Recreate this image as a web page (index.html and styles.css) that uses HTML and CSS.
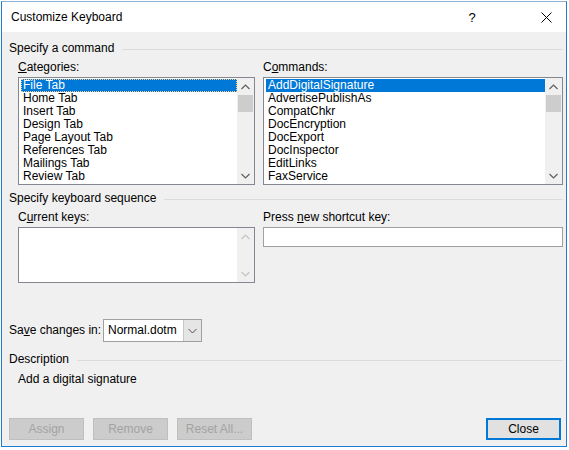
FILE: index.html
```html
<!DOCTYPE html>
<html>
<head>
<meta charset="utf-8">
<link rel="stylesheet" href="styles.css">
</head>
<body>
<div class="window">
  <div class="titlebar">
    <span class="title">Customize Keyboard</span>
    <span class="tb-help">?</span>
    <span class="tb-close">
      <svg width="11" height="11" viewBox="0 0 11 11"><path d="M0.5 0.5 L10.5 10.5 M10.5 0.5 L0.5 10.5" stroke="#000" stroke-width="1" fill="none"/></svg>
    </span>
  </div>
  <div class="content">
    <div class="group-head g1"><span>Specify a command</span><i class="rule"></i></div>
    <div class="cols">
      <div class="col col-left">
        <div class="label"><u>C</u>ategories:</div>
        <div class="listbox">
          <div class="items">
            <div class="item sel">File Tab</div>
            <div class="item">Home Tab</div>
            <div class="item">Insert Tab</div>
            <div class="item">Design Tab</div>
            <div class="item">Page Layout Tab</div>
            <div class="item">References Tab</div>
            <div class="item">Mailings Tab</div>
            <div class="item">Review Tab</div>
          </div>
          <div class="vscroll">
            <span class="arrow"><svg width="9" height="6" viewBox="0 0 9 6"><path d="M0.5 5 L4.5 1 L8.5 5" stroke="#606060" stroke-width="1.2" fill="none"/></svg></span>
            <span class="thumb"></span>
            <span class="track"></span>
            <span class="arrow"><svg width="9" height="6" viewBox="0 0 9 6"><path d="M0.5 1 L4.5 5 L8.5 1" stroke="#606060" stroke-width="1.2" fill="none"/></svg></span>
          </div>
        </div>
      </div>
      <div class="col col-right">
        <div class="label">C<u>o</u>mmands:</div>
        <div class="listbox">
          <div class="items">
            <div class="item sel nofocus">AddDigitalSignature</div>
            <div class="item">AdvertisePublishAs</div>
            <div class="item">CompatChkr</div>
            <div class="item">DocEncryption</div>
            <div class="item">DocExport</div>
            <div class="item">DocInspector</div>
            <div class="item">EditLinks</div>
            <div class="item">FaxService</div>
          </div>
          <div class="vscroll">
            <span class="arrow"><svg width="9" height="6" viewBox="0 0 9 6"><path d="M0.5 5 L4.5 1 L8.5 5" stroke="#606060" stroke-width="1.2" fill="none"/></svg></span>
            <span class="thumb"></span>
            <span class="track"></span>
            <span class="arrow"><svg width="9" height="6" viewBox="0 0 9 6"><path d="M0.5 1 L4.5 5 L8.5 1" stroke="#606060" stroke-width="1.2" fill="none"/></svg></span>
          </div>
        </div>
      </div>
    </div>

    <div class="group-head g2"><span>Specify keyboard sequence</span><i class="rule"></i></div>
    <div class="cols cols2">
      <div class="col col-left">
        <div class="label">C<u>u</u>rrent keys:</div>
        <div class="keysbox">
          <div class="items"></div>
          <div class="vscroll disabled">
            <span class="arrow"><svg width="9" height="6" viewBox="0 0 9 6"><path d="M0.5 5 L4.5 1 L8.5 5" stroke="#c5c5c5" stroke-width="1.2" fill="none"/></svg></span>
            <span class="track"></span>
            <span class="arrow"><svg width="9" height="6" viewBox="0 0 9 6"><path d="M0.5 1 L4.5 5 L8.5 1" stroke="#c5c5c5" stroke-width="1.2" fill="none"/></svg></span>
          </div>
        </div>
      </div>
      <div class="col col-right">
        <div class="label">Press <u>n</u>ew shortcut key:</div>
        <div class="textbox"></div>
      </div>
    </div>

    <div class="save-row">
      <span class="save-label">Sa<u>v</u>e changes in:</span>
      <div class="combo">
        <span class="combo-text">Normal.dotm</span>
        <span class="combo-btn"><svg width="9" height="6" viewBox="0 0 9 6"><path d="M0.5 1 L4.5 5 L8.5 1" stroke="#505050" stroke-width="1" fill="none"/></svg></span>
      </div>
    </div>

    <div class="group-head g3"><span>Description</span><i class="rule"></i></div>
    <div class="desc">Add a digital signature</div>

    <div class="buttons">
      <span class="btn disabled">Assign</span>
      <span class="btn disabled">Remove</span>
      <span class="btn disabled">Reset All...</span>
      <span class="btn default">Close</span>
    </div>
  </div>
</div>
</body>
</html>
```

FILE: styles.css
```css
html, body {
  margin: 0;
  padding: 0;
  background: #ffffff;
}
body {
  font-family: "Liberation Sans", Arial, sans-serif;
  font-size: 12px;
  color: #000;
}
.window {
  box-sizing: border-box;
  margin: 1px 0 0 1px;
  width: 566px;
  height: 446px;
  border: 1px solid #1a7fd4;
  border-top-color: #8fb3d6;
  background: #f0f0f0;
  display: flex;
  flex-direction: column;
}
.titlebar {
  height: 30px;
  background: #ffffff;
  display: flex;
  align-items: center;
  padding-left: 9px;
}
.title {
  font-size: 12px;
  line-height: 15px;
}
.tb-help {
  margin-left: auto;
  width: 46px;
  text-align: center;
  font-size: 13px;
}
.tb-close {
  width: 46px;
  margin-left: 28px;
  margin-right: -3px;
  display: flex;
  justify-content: center;
  padding-top: 1px;
}
.content {
  padding: 0 3px 0 7px;
  flex: 1;
}
.group-head {
  display: flex;
  align-items: center;
  line-height: 15px;
  height: 15px;
}
.group-head .rule {
  flex: 1;
  height: 1px;
  background: #dcdcdc;
  margin-left: 8px;
  margin-top: 2px;
}
.g1 { margin-top: 9px; }
.g2 { margin-top: 6px; }
.g3 { margin-top: 10px; }
.cols {
  display: flex;
  gap: 8px;
  padding-left: 9px;
}
.col-left { width: 237px; }
.col-right { flex: 1; }
.label {
  line-height: 15px;
  height: 15px;
  margin-top: 4px;
  margin-bottom: 2px;
}
.label u { text-decoration-thickness: 1px; text-underline-offset: 1px; }
.listbox, .keysbox {
  box-sizing: border-box;
  height: 108px;
  border: 1px solid #828790;
  background: #ffffff;
  display: flex;
}
.keysbox { height: 56px; }
.items {
  flex: 1;
  padding: 1px 0 1px 2px;
}
.item {
  line-height: 13px;
  height: 13px;
  padding-left: 2px;
  white-space: nowrap;
}
.item.sel {
  background: #0078d7;
  color: #ffffff;
  outline: 1px dotted #f3c98f;
  outline-offset: -1px;
}
.item.sel.nofocus { outline: none; }
.vscroll {
  width: 17px;
  background: #f0f0f0;
  display: flex;
  flex-direction: column;
}
.vscroll .arrow {
  height: 17px;
  display: flex;
  align-items: center;
  justify-content: center;
}
.vscroll .thumb {
  height: 17px;
  margin: 0 1px;
  background: #cdcdcd;
}
.vscroll .track { flex: 1; }
.textbox {
  box-sizing: border-box;
  height: 20px;
  border: 1px solid #a0a0a0;
  background: #ffffff;
}
.save-row {
  display: flex;
  align-items: center;
  margin-top: 36px;
  height: 23px;
}
.save-label {
  width: 94px;
  line-height: 15px;
}
.combo {
  box-sizing: border-box;
  width: 99px;
  height: 23px;
  border: 1px solid #a0a0a0;
  background: #ffffff;
  display: flex;
}
.combo-text {
  flex: 1;
  padding-left: 4px;
  line-height: 21px;
}
.combo-btn {
  width: 17px;
  background: #e5e5e5;
  border-left: 1px solid #c8c8c8;
  display: flex;
  align-items: center;
  justify-content: center;
}
.desc {
  margin-top: 5px;
  padding-left: 9px;
  line-height: 15px;
}
.buttons {
  display: flex;
  gap: 9px;
  margin-top: 31px;
}
.btn {
  box-sizing: border-box;
  width: 75px;
  height: 22px;
  display: flex;
  align-items: center;
  justify-content: center;
  border: 1px solid #bfbfbf;
  background: #cccccc;
  color: #a3a3a3;
}
.btn.default {
  margin-left: auto;
  margin-right: 2px;
  border: 2px solid #0078d7;
  background: #e1e1e1;
  color: #000;
}
```
